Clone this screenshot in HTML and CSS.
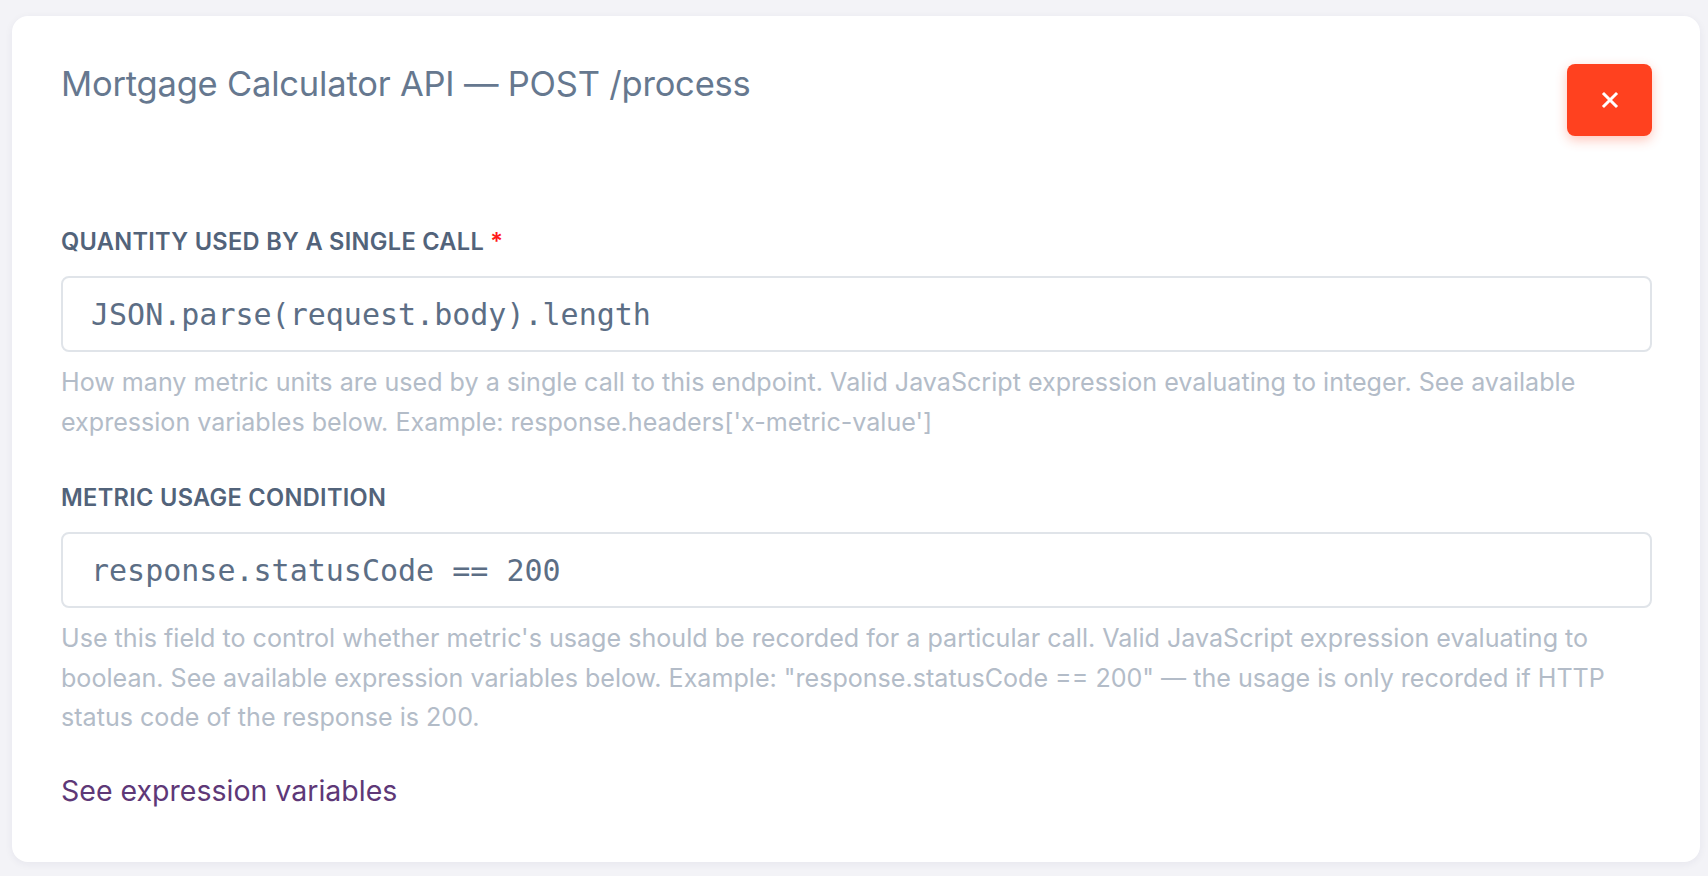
FILE: index.html
```html
<!DOCTYPE html>
<html lang="en">
<head>
<meta charset="utf-8">
<title>Mortgage Calculator API — POST /process</title>
<link rel="stylesheet" href="styles.css">
</head>
<body>
<div class="card">
  <div class="card-header">
    <h2 class="title">Mortgage Calculator API — POST /process</h2>
    <button class="close-btn" type="button" aria-label="Close">
      <svg width="18" height="18" viewBox="0 0 18 18" fill="none" stroke="#ffffff" stroke-width="3" stroke-linecap="square"><path d="M3 3 L15 15 M15 3 L3 15"/></svg>
    </button>
  </div>

  <div class="field first">
    <label class="label">QUANTITY USED BY A SINGLE CALL <span class="req">*</span></label>
    <div class="input">JSON.parse(request.body).length</div>
    <p class="help">How many metric units are used by a single call to this endpoint. Valid JavaScript expression evaluating to integer. See available expression variables below. Example: response.headers['x-metric-value']</p>
  </div>

  <div class="field">
    <label class="label">METRIC USAGE CONDITION</label>
    <div class="input">response.statusCode == 200</div>
    <p class="help">Use this field to control whether metric's usage should be recorded for a particular call. Valid JavaScript expression evaluating to boolean. See available expression variables below. Example: "response.statusCode == 200" — the usage is only recorded if HTTP status code of the response is 200.</p>
  </div>

  <a class="link" href="#">See expression variables</a>
</div>
</body>
</html>
```

FILE: styles.css
```css
html, body {
  margin: 0;
  padding: 0;
}
body {
  background: #f3f3f7;
  font-family: Inter, "Noto Sans", "Liberation Sans", sans-serif;
  padding: 16px 8px 13px 12px;
  height: 876px;
  box-sizing: border-box;
  overflow: hidden;
}
.card {
  background: #ffffff;
  border-radius: 16px;
  box-shadow: 0 2px 8px rgba(40, 40, 80, 0.06);
  padding: 48px 48px 51px 49px;
  display: flex;
  flex-direction: column;
  align-items: flex-start;
}
.card-header {
  display: flex;
  justify-content: space-between;
  align-items: flex-start;
  align-self: stretch;
}
.title {
  margin: 0;
  font-size: 34.5px;
  line-height: 40px;
  font-weight: 400;
  color: #66788f;
  letter-spacing: -0.2px;
}
.close-btn {
  width: 85px;
  height: 72px;
  border: none;
  border-radius: 8px;
  background: #ff411f;
  box-shadow: 0 4px 12px rgba(255, 65, 31, 0.3);
  display: flex;
  align-items: center;
  justify-content: center;
  padding: 0;
}
.field {
  align-self: stretch;
  display: flex;
  flex-direction: column;
  margin-top: 44px;
}
.field.first {
  margin-top: 94px;
}
.label {
  font-size: 23.6px;
  line-height: 24px;
  font-weight: 600;
  color: #52637a;
  letter-spacing: 0.3px;
}
.req {
  color: #ff1a1a;
}
.input {
  margin-top: 22px;
  height: 76px;
  box-sizing: border-box;
  border: 2px solid #e0e4e9;
  border-radius: 8px;
  padding: 0 28px;
  display: flex;
  align-items: center;
  font-family: "DejaVu Sans Mono", "Liberation Mono", monospace;
  font-size: 30px;
  color: #5c6e85;
}
.help {
  margin: 11px 0 0;
  font-size: 25.1px;
  line-height: 39.5px;
  color: #b3bcc8;
}
.link {
  margin-top: 33px;
  font-size: 28.5px;
  line-height: 40px;
  color: #5e3877;
  text-decoration: none;
}
```
